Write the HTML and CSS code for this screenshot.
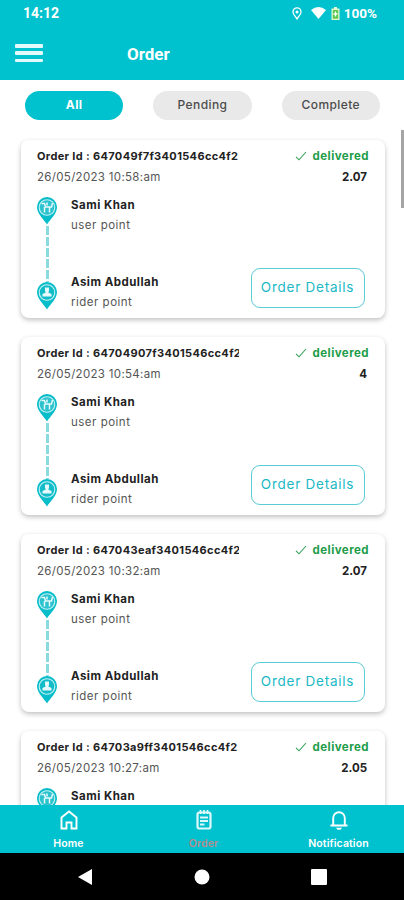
FILE: index.html
```html
<!DOCTYPE html>
<html lang="en">
<head>
<meta charset="utf-8">
<title>Order</title>
<link rel="stylesheet" href="styles.css">
</head>
<body>
<svg class="defs" aria-hidden="true">
  <symbol id="pin-user" viewBox="0 0 20 28">
    <path d="M10 27.500C7 22.500 0 17 0 10a10 10 0 0 1 20 0c0 7-7 12.500-10 17.500z" fill="#06bdc9"/>
    <circle cx="10" cy="10.500" r="7.800" fill="#2cc2ce" stroke="#c5f1f4" stroke-width="1.100"/>
    <path d="M4.500 6.500h3l1 3.500h6l1-4M7.500 10v5.500M12.500 10v5.500M10 5.500v3" fill="none" stroke="#e6fafb" stroke-width="1.500"/>
  </symbol>
  <symbol id="pin-rider" viewBox="0 0 20 28">
    <path d="M10 27.500C7 22.500 0 17 0 10a10 10 0 0 1 20 0c0 7-7 12.500-10 17.500z" fill="#06bdc9"/>
    <circle cx="10" cy="10.500" r="7.800" fill="#12bdc9" stroke="#c5f1f4" stroke-width="1.100"/>
    <path d="M8 5.500h4v3.500l-.8 1.500 3.300 1.500v2.500h-9V12l3.300-1.500L8 9z" fill="#e6fafb"/>
  </symbol>
  <symbol id="check" viewBox="0 0 12 10">
    <path d="M1 5.800l3 3L11 1" fill="none" stroke="#35a058" stroke-width="1.100"/>
  </symbol>
</svg>
<header class="header">
  <div class="status">
    <span class="clock">14:12</span>
    <svg class="s-pin" viewBox="0 0 10 13"><path d="M5 12C3.500 9.500 1 7.500 1 4.900a4 4 0 0 1 8 0C9 7.500 6.500 9.500 5 12z" fill="none" stroke="#fff" stroke-width="1.300"/><circle cx="5" cy="4.900" r="1.500" fill="#fff"/></svg>
    <svg class="s-wifi" viewBox="0 0 15 12"><path d="M0 3Q7.500-3 15 3L7.500 12z" fill="#fff"/></svg>
    <svg class="s-bat" viewBox="0 0 9 13"><path d="M3 0h3v1.500h2.500V13H.5V1.500H3z" fill="#e4f7d0"/><path d="M1.800 3h5.400v8.700H1.800z" fill="#5cc94c"/><path d="M4.500 4.500v5M2.500 7h4" stroke="#fff" stroke-width="1.300"/></svg>
    <span class="percent">100%</span>
  </div>
  <div class="bar">
    <div class="burger"><i></i><i></i><i></i></div>
    <h1 class="title">Order</h1>
  </div>
</header>
<nav class="tabs">
  <div class="tab active">All</div>
  <div class="tab">Pending</div>
  <div class="tab">Complete</div>
</nav>
<main class="list">
  <article class="card">
    <div class="row"><div class="oid">Order Id : 647049f7f3401546cc4f2</div><div class="state"><svg class="check"><use href="#check"/></svg><span>delivered</span></div></div>
    <div class="row"><div class="date">26/05/2023 10:58:am</div><div class="price">2.07</div></div>
    <div class="route">
      <div class="track"><svg class="pin"><use href="#pin-user"/></svg><div class="dash"></div><svg class="pin"><use href="#pin-rider"/></svg></div>
      <div class="stops"><div><div class="name">Sami Khan</div><div class="point">user point</div></div><div><div class="name">Asim Abdullah</div><div class="point">rider point</div></div></div>
      <div class="details">Order Details</div>
    </div>
  </article>
  <article class="card">
    <div class="row"><div class="oid">Order Id : 64704907f3401546cc4f2</div><div class="state"><svg class="check"><use href="#check"/></svg><span>delivered</span></div></div>
    <div class="row"><div class="date">26/05/2023 10:54:am</div><div class="price">4</div></div>
    <div class="route">
      <div class="track"><svg class="pin"><use href="#pin-user"/></svg><div class="dash"></div><svg class="pin"><use href="#pin-rider"/></svg></div>
      <div class="stops"><div><div class="name">Sami Khan</div><div class="point">user point</div></div><div><div class="name">Asim Abdullah</div><div class="point">rider point</div></div></div>
      <div class="details">Order Details</div>
    </div>
  </article>
  <article class="card">
    <div class="row"><div class="oid">Order Id : 647043eaf3401546cc4f2</div><div class="state"><svg class="check"><use href="#check"/></svg><span>delivered</span></div></div>
    <div class="row"><div class="date">26/05/2023 10:32:am</div><div class="price">2.07</div></div>
    <div class="route">
      <div class="track"><svg class="pin"><use href="#pin-user"/></svg><div class="dash"></div><svg class="pin"><use href="#pin-rider"/></svg></div>
      <div class="stops"><div><div class="name">Sami Khan</div><div class="point">user point</div></div><div><div class="name">Asim Abdullah</div><div class="point">rider point</div></div></div>
      <div class="details">Order Details</div>
    </div>
  </article>
  <article class="card">
    <div class="row"><div class="oid">Order Id : 64703a9ff3401546cc4f2</div><div class="state"><svg class="check"><use href="#check"/></svg><span>delivered</span></div></div>
    <div class="row"><div class="date">26/05/2023 10:27:am</div><div class="price">2.05</div></div>
    <div class="route">
      <div class="track"><svg class="pin"><use href="#pin-user"/></svg></div>
      <div class="stops"><div><div class="name">Sami Khan</div></div></div>
    </div>
  </article>
  <div class="thumb"></div>
</main>
<nav class="bottom">
  <div class="item home"><svg viewBox="0 0 18 20"><path d="M1.500 18.500V7.500L9 1.500l7.500 6v11h-5v-6h-5v6z" fill="none" stroke="#fff" stroke-width="1.900"/></svg><span>Home</span></div>
  <div class="item order"><svg viewBox="0 0 18 20"><rect x="2.500" y="2.500" width="13" height="16" rx="2" fill="none" stroke="#dff8fa" stroke-width="2.200"/><path d="M5.500 0v4M9 0v4M12.500 0v4M5 7.500h8M5 11h8M5 14.500h4.500" stroke="#dff8fa" stroke-width="1.800"/></svg><span>Order</span></div>
  <div class="item note"><svg viewBox="0 0 18 20"><path d="M.5 15.500h17M3.200 15V8a5.800 5.800 0 0 1 11.600 0v7" fill="none" stroke="#fff" stroke-width="1.900"/><path d="M6 17.800h6l-1.500 2h-3z" fill="#fff"/></svg><span>Notification</span></div>
</nav>
<footer class="system">
  <svg viewBox="0 0 16 18"><path d="M15 1v16L1 9z" fill="#fff"/></svg>
  <svg viewBox="0 0 16 18"><circle cx="8" cy="9" r="7.500" fill="#fff"/></svg>
  <svg viewBox="0 0 16 18"><rect y="1" width="16" height="16" rx="1" fill="#fff"/></svg>
</footer>
</body>
</html>
```
FILE: styles.css
```css
* { box-sizing: border-box; }
body { margin: 0; width: 404px; height: 900px; overflow: hidden; display: flex; flex-direction: column; background: #fff; font-family: Inter, "Open Sans", sans-serif; color: #222; white-space: nowrap; }
.defs { position: absolute; width: 0; height: 0; }
.header { height: 80px; flex: none; background: #00c2ce; color: #fff; font-family: Roboto, sans-serif; font-weight: 700; }
.status { height: 26px; display: flex; align-items: center; padding: 0 27px 0 23px; font-size: 14px; }
.clock { margin-right: auto; }
.percent { font-size: 13.500px; }
.s-pin { width: 10px; height: 13px; margin-right: 9px; }
.s-wifi { width: 15px; height: 12px; margin-right: 5px; }
.s-bat { width: 9px; height: 13px; margin-right: 4px; }
.bar { height: 54px; display: flex; align-items: center; padding-left: 15px; }
.burger { width: 28px; height: 18px; display: flex; flex-direction: column; justify-content: space-between; }
.burger i { height: 3.500px; border-radius: 1px; background: #e2fafb; }
.title { margin: 1px 0 0 84px; font-size: 17px; line-height: 20px; }
.tabs { flex: none; height: 50px; display: flex; gap: 30px; padding: 11px 24px 0 25px; }
.tab { flex: 1; height: 29px; border-radius: 15px; background: #e9e9e9; text-align: center; font-size: 12px; font-weight: 500; line-height: 27px; color: #4c4c4c; letter-spacing: .4px; }
.tab.active { background: #00c2ce; color: #fff; font-weight: 700; }
.list { position: relative; flex: none; height: 675px; overflow: hidden; display: flex; flex-direction: column; gap: 19px; padding: 10px 19px 0 21px; }
.card { flex: none; height: 178px; padding: 6px 16px 0; border-radius: 8px; background: #fff; box-shadow: 0 2px 5px rgba(0,0,0,.25); }
.row { height: 20.500px; display: flex; justify-content: space-between; line-height: 21px; }
.oid { width: 201.500px; overflow: hidden; font-size: 11px; font-weight: 700; letter-spacing: .35px; }
.state { display: flex; align-items: center; gap: 6px; color: #219c49; font-size: 11.500px; font-weight: 700; letter-spacing: .45px; }
.check { width: 12px; height: 10px; }
.date { font-size: 11.500px; color: #555; letter-spacing: .32px; }
.price { font-size: 11.500px; font-weight: 700; padding-right: 2px; }
.route { display: flex; height: 125px; padding-top: 7px; }
.track { width: 20px; display: flex; flex-direction: column; align-items: center; padding-top: 3px; }
.pin { width: 20px; height: 28px; flex: none; }
.dash { width: 3px; height: 56px; margin: 1px 0 0 1px; background: repeating-linear-gradient(#8adbe0 0 9px, transparent 9px 11px); }
.stops { display: flex; flex-direction: column; gap: 36px; margin-left: 14px; line-height: 20.500px; padding-top: .5px; }
.name { font-size: 11.500px; font-weight: 700; letter-spacing: .48px; }
.point { font-size: 11.500px; color: #555; letter-spacing: .5px; }
.details { margin: 74px 4.500px 0 auto; width: 114px; height: 40px; border: 1px solid #5accd4; border-radius: 9px; color: #20b8c5; text-align: center; font-size: 13.500px; line-height: 37px; letter-spacing: .75px; }
.thumb { position: absolute; right: 0; top: 0; width: 3px; height: 78px; background: #a5a5a5; }
.bottom { flex: none; height: 48px; background: #00c2ce; display: flex; padding: 5px 0 0 1px; color: #fff; }
.item { flex: none; width: 135px; display: flex; flex-direction: column; align-items: center; font-size: 10.500px; font-weight: 600; line-height: 14px; gap: 7px; letter-spacing: .1px; }
.item svg { width: 18px; height: 20px; }
.order span { color: #b58b8e; }
.system { flex: none; height: 47px; background: #000; display: flex; gap: 101px; padding: 15px 0 0 77px; }
.system svg { width: 16px; height: 18px; }
```
